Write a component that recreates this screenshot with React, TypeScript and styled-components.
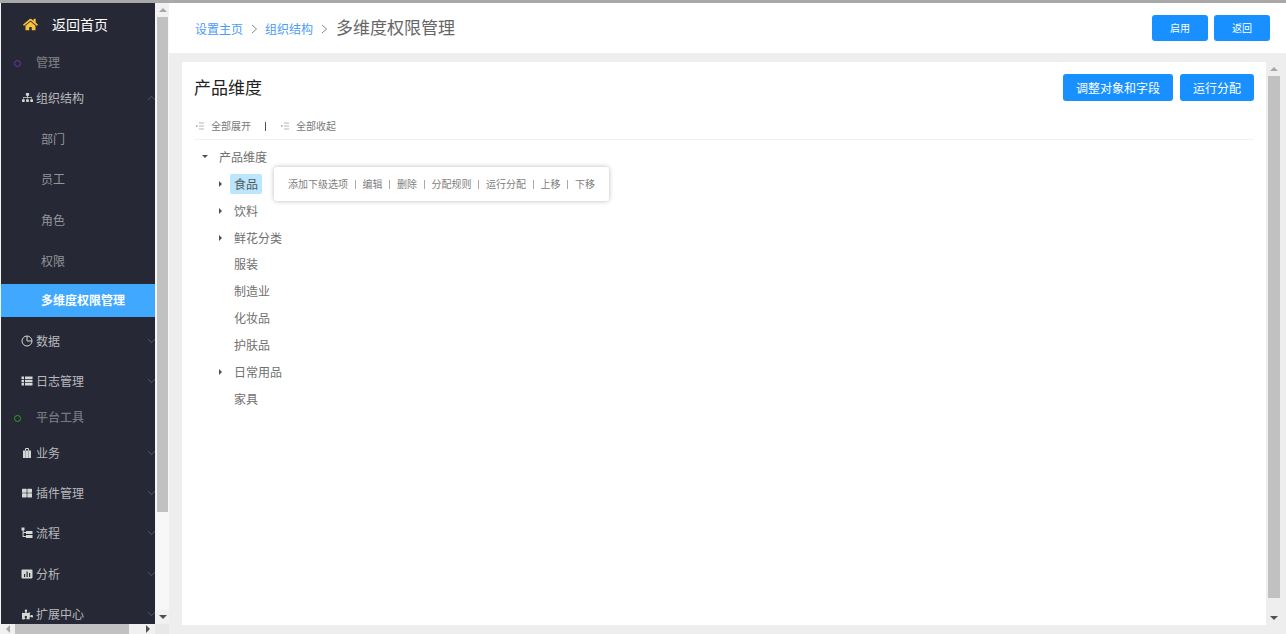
import React from "react";
import styled, { createGlobalStyle } from "styled-components";
import { FaHome, FaSitemap, FaThLarge, FaPuzzlePiece } from "react-icons/fa";
import { ChevronDown, ChevronUp } from "lucide-react";

const Global = createGlobalStyle`
  html, body { margin: 0; padding: 0; overflow: hidden; }
  body { font-family: "Noto Sans CJK SC", "Liberation Sans", sans-serif; }
  * { box-sizing: border-box; }
`;

const Page = styled.div`
  width: 1286px; height: 634px; display: flex; flex-direction: column;
  overflow: hidden; background: #eeeeee;
`;
const TopLine = styled.div`height: 3px; flex: none; background: #a9a9a9;`;
const Body = styled.div`flex: 1; min-height: 0; display: flex;`;

const SideColumn = styled.div`
  width: 169px; flex: none; display: flex; flex-direction: column; background: #f3f3f3;
`;
const SideTop = styled.div`flex: 1; min-height: 0; display: flex; overflow: hidden;`;
const Sidebar = styled.nav`
  width: 154px; margin-left: 1px; flex: none; background: #262835; overflow: hidden;
`;
const Row = styled.div<{ $h: number; $pad: number; $size?: number; $color: string; $weight?: number; $gap?: number; $top?: number }>`
  height: ${p => p.$h}px; flex: none; display: flex; align-items: center; position: relative;
  padding-left: ${p => p.$pad}px; padding-top: ${p => p.$top ?? 0}px; gap: ${p => p.$gap ?? 3}px;
  font-size: ${p => p.$size ?? 12}px; color: ${p => p.$color}; font-weight: ${p => p.$weight ?? 400};
  white-space: nowrap; line-height: 1;
`;
const ActiveRow = styled.div`
  height: 33px; margin: 3px 0 4px; padding: 0 0 1px 40px; display: flex; align-items: center;
  background: #40a9ff; color: #fff; font-size: 12px; font-weight: 700; white-space: nowrap; line-height: 1;
`;
const Ring = styled.span<{ $c: string }>`
  width: 7px; height: 7px; border-radius: 50%; border: 1.5px solid ${p => p.$c}; flex: none;
  margin-top: 2px; margin-right: 15px;
`;
const IconBox = styled.span<{ $w?: number }>`
  width: ${p => p.$w ?? 12}px; display: flex; justify-content: center; align-items: center; flex: none; color: #d6d6d6;
`;
const Chevron = styled.span`
  position: absolute; right: -3px; top: 50%; transform: translateY(-50%); display: flex; color: #666975;
`;

const VBar = styled.div`
  flex: 1; display: flex; flex-direction: column; align-items: center; background: #f7f7f7; margin-left: 1px;
`;
const ArrowCell = styled.div`
  flex: none; height: 14px; width: 100%; display: flex; align-items: center; justify-content: center; background: #f1f1f1;
`;
const Tri = styled.span<{ $dir: "up" | "down" | "left" | "right"; $c?: string; $s?: number }>`
  width: 0; height: 0; flex: none; border-style: solid;
  border-color: transparent;
  ${p => {
    const s = p.$s ?? 4; const c = p.$c ?? "#505050";
    if (p.$dir === "up") return `border-width: 0 ${s}px ${s}px; border-bottom-color: ${c};`;
    if (p.$dir === "down") return `border-width: ${s}px ${s}px 0; border-top-color: ${c};`;
    if (p.$dir === "left") return `border-width: ${s}px ${s}px ${s}px 0; border-right-color: ${c};`;
    return `border-width: ${s}px 0 ${s}px ${s}px; border-left-color: ${c};`;
  }}
`;
const VThumb = styled.div<{ $h: number; $w: number }>`
  width: ${p => p.$w}px; height: ${p => p.$h}px; flex: none; background: #c1c1c1;
`;
const Spacer = styled.div`flex: 1;`;

const HBar = styled.div`
  height: 10px; flex: none; display: flex; align-items: center; background: #f1f1f1; padding-left: 1px;
`;
const HArrow = styled.div`width: 14px; height: 10px; flex: none; display: flex; align-items: center; justify-content: center;`;
const HThumb = styled.div`width: 114px; height: 10px; background: #c1c1c1; flex: none;`;
const HTrack = styled.div`width: 12px; flex: none;`;
const Corner = styled.div`flex: 1; height: 10px; background: #e8e8e8;`;

const Main = styled.main`flex: 1; min-width: 0; display: flex; flex-direction: column;`;
const Header = styled.header`
  height: 50px; flex: none; background: #fff; display: flex; align-items: center;
  padding: 0 16px 0 26px;
`;
const Crumb = styled.span`font-size: 12px; color: #4a9cf5; line-height: 1; margin-top: 2px;`;
const CrumbSep = styled.span`display: flex; color: #888; margin: 2px 6px 0; width: 10px; justify-content: center;`;
const CrumbNow = styled.span`font-size: 17px; color: #666; line-height: 1; margin-top: -3px; margin-left: 1px;`;
const Button = styled.button<{ $w: number; $h: number; $size: number }>`
  width: ${p => p.$w}px; height: ${p => p.$h}px; flex: none; padding: 0; border: none; border-radius: 3px;
  background: #1890ff; color: #fff; font-family: inherit; font-size: ${p => p.$size}px; line-height: 1;
`;
const ButtonGroup = styled.div<{ $gap: number }>`margin-left: auto; display: flex; gap: ${p => p.$gap}px;`;

const Content = styled.div`flex: 1; min-height: 0; display: flex; padding: 9px 0 9px 13px;`;
const Panel = styled.section`width: 1084px; flex: none; background: #fff; padding: 12px 12px 0;`;
const PanelHead = styled.div`height: 27px; display: flex; align-items: center;`;
const Title = styled.h2`margin: -2px 0 0; font-size: 17px; font-weight: 400; color: #222; line-height: 1;`;
const Toolbar = styled.div`
  height: 39px; display: flex; align-items: center; border-bottom: 1px solid #f0f0f0; padding: 12px 0 0 2px;
  font-size: 10px; color: #777; line-height: 1;
`;
const ToolIcon = styled.svg`width: 8px; height: 8px; flex: none; margin-right: 7px;`;
const ToolSep = styled.span`width: 1px; height: 9px; background: #555; margin: 0 15px 0 14px;`;

const Tree = styled.div`padding-top: 3.4px;`;
const TreeRow = styled.div<{ $indent: number }>`
  height: 26.9px; display: flex; align-items: center; position: relative; padding-left: ${p => p.$indent}px;
  font-size: 12px; color: #707070; line-height: 1;
`;
const CaretBox = styled.span`width: 16px; padding-right: 4px; display: flex; justify-content: center; flex: none;`;
const Label = styled.span<{ $selected?: boolean }>`
  height: 20px; padding: 0 4px; display: flex; align-items: center; border-radius: 2px;
  ${p => p.$selected ? "background: #bae7ff; color: #555;" : ""}
`;
const Popup = styled.div`
  position: absolute; left: 80px; top: -3px; height: 34px; width: 335px; padding-left: 14px;
  display: flex; align-items: center; background: #fff; border-radius: 3px;
  box-shadow: 0 0 5px rgba(0,0,0,0.28); font-size: 10px; color: #808080; z-index: 2;
`;
const PopSep = styled.span`width: 1px; height: 9px; background: #aaa; margin: 0 6.75px;`;

const PanelBar = styled.div`
  width: 14px; flex: none; display: flex; flex-direction: column; align-items: center; padding-left: 1px;
`;
const PanelArrow = styled.div`height: 14px; flex: none; display: flex; align-items: center; justify-content: center; width: 100%;`;

const sc = (d: React.ReactNode, w = 12) => <IconBox $w={w}>{d}</IconBox>;

const PieIcon = () => (
  <svg width="12" height="12" viewBox="0 0 12 12" fill="none" stroke="#d6d6d6" strokeWidth="1">
    <circle cx="6" cy="6" r="5" /><path d="M6 1v5h5" />
  </svg>
);
const ListIcon = () => (
  <svg width="12" height="12" viewBox="0 0 12 12" fill="#d6d6d6">
    <rect x="0.5" y="1.5" width="2.5" height="2.5" /><rect x="0.5" y="4.8" width="2.5" height="2.5" /><rect x="0.5" y="8" width="2.5" height="2.5" />
    <rect x="4" y="1.5" width="7.5" height="2.5" /><rect x="4" y="4.8" width="7.5" height="2.5" /><rect x="4" y="8" width="7.5" height="2.5" />
  </svg>
);
const BagIcon = () => (
  <svg width="12" height="12" viewBox="0 0 12 12">
    <rect x="2" y="3.5" width="8" height="7.5" fill="#d6d6d6" />
    <path d="M4.5 3.5V1.5h3v2" fill="none" stroke="#d6d6d6" />
    <rect x="4" y="3.5" width="1" height="7.5" fill="#a9a9a9" /><rect x="7" y="3.5" width="1" height="7.5" fill="#a9a9a9" />
  </svg>
);
const FlowIcon = () => (
  <svg width="12" height="12" viewBox="0 0 12 12" fill="#d6d6d6">
    <rect x="0.5" y="0.5" width="3" height="3" /><rect x="1.6" y="3" width="1" height="7" />
    <rect x="2" y="5" width="3" height="1" /><rect x="2" y="9" width="3" height="1" />
    <rect x="5" y="4" width="6.5" height="3" /><rect x="5" y="8" width="6.5" height="3" />
  </svg>
);
const ReportIcon = () => (
  <svg width="12" height="12" viewBox="0 0 12 12">
    <rect x="0.5" y="1.5" width="11" height="9" rx="1" fill="#d6d6d6" />
    <rect x="3" y="6" width="1.2" height="3" fill="#262835" /><rect x="5.5" y="3.5" width="1.2" height="5.5" fill="#262835" /><rect x="8" y="5" width="1.2" height="4" fill="#262835" />
  </svg>
);
const OutdentIcon = () => (
  <ToolIcon viewBox="0 0 8 8" fill="#b5b5b5">
    <rect x="3" y="0.5" width="5" height="1" /><rect x="3" y="3.5" width="5" height="1" /><rect x="3" y="6.5" width="5" height="1" />
    <rect x="0" y="3" width="1.5" height="2" />
  </ToolIcon>
);

const groupProps = { $pad: 20, $color: "#b9b9bd" };
const Down = () => <Chevron><ChevronDown size={13} strokeWidth={1.3} /></Chevron>;

const treeItems: { name: string; caret?: boolean }[] = [
  { name: "饮料", caret: true }, { name: "鲜花分类", caret: true }, { name: "服装" }, { name: "制造业" },
  { name: "化妆品" }, { name: "护肤品" }, { name: "日常用品", caret: true }, { name: "家具" },
];
const popupItems = ["添加下级选项", "编辑", "删除", "分配规则", "运行分配", "上移", "下移"];

export default function App() {
  return (
    <Page>
      <Global />
      <TopLine />
      <Body>
        <SideColumn>
          <SideTop>
            <Sidebar>
              <Row $h={42} $pad={22} $size={14} $color="#ffffff" $gap={14}>
                {sc(<FaHome size={15} color="#f7c33c" />, 15)}返回首页
              </Row>
              <Row $h={32} $top={2} $pad={13} $color="#77787f" $weight={500} $gap={0}>
                <Ring $c="#7a2fb5" />管理
              </Row>
              <Row $h={41.5} $pad={20} $color="#b9b9bd">
                {sc(<FaSitemap size={11} />)}组织结构
                <Chevron><ChevronUp size={13} strokeWidth={1.3} /></Chevron>
              </Row>
              <Row $h={40.5} $pad={40} $color="#94959b">部门</Row>
              <Row $h={40.5} $pad={40} $color="#94959b">员工</Row>
              <Row $h={40.5} $pad={40} $color="#94959b">角色</Row>
              <Row $h={41} $pad={40} $color="#94959b">权限</Row>
              <ActiveRow>多维度权限管理</ActiveRow>
              <Row {...groupProps} $h={40}>{sc(<PieIcon />)}数据<Down /></Row>
              <Row {...groupProps} $h={40}>{sc(<ListIcon />)}日志管理<Down /></Row>
              <Row $h={32} $pad={13} $color="#77787f" $weight={500} $gap={0}>
                <Ring $c="#2aa52a" />平台工具
              </Row>
              <Row {...groupProps} $h={40}>{sc(<BagIcon />)}业务<Down /></Row>
              <Row {...groupProps} $h={40}>{sc(<FaThLarge size={10} />)}插件管理<Down /></Row>
              <Row {...groupProps} $h={40}>{sc(<FlowIcon />)}流程<Down /></Row>
              <Row {...groupProps} $h={41}>{sc(<ReportIcon />)}分析<Down /></Row>
              <Row {...groupProps} $h={40}>{sc(<FaPuzzlePiece size={11} />)}扩展中心<Down /></Row>
            </Sidebar>
            <VBar>
              <ArrowCell><Tri $dir="up" $c="#a8a8a8" /></ArrowCell>
              <VThumb $w={11} $h={495} />
              <Spacer />
              <ArrowCell><Tri $dir="down" /></ArrowCell>
            </VBar>
          </SideTop>
          <HBar>
            <HArrow><Tri $dir="left" $c="#a8a8a8" /></HArrow>
            <HThumb />
            <HTrack />
            <HArrow><Tri $dir="right" /></HArrow>
            <Corner />
          </HBar>
        </SideColumn>
        <Main>
          <Header>
            <Crumb>设置主页</Crumb>
            <CrumbSep><svg width="7" height="10" viewBox="0 0 7 10" fill="none" stroke="currentColor" strokeWidth="1"><path d="M1 1l4.5 4L1 9" /></svg></CrumbSep>
            <Crumb>组织结构</Crumb>
            <CrumbSep><svg width="7" height="10" viewBox="0 0 7 10" fill="none" stroke="currentColor" strokeWidth="1"><path d="M1 1l4.5 4L1 9" /></svg></CrumbSep>
            <CrumbNow>多维度权限管理</CrumbNow>
            <ButtonGroup $gap={6}>
              <Button $w={56} $h={26} $size={10}>启用</Button>
              <Button $w={56} $h={26} $size={10}>返回</Button>
            </ButtonGroup>
          </Header>
          <Content>
            <Panel>
              <PanelHead>
                <Title>产品维度</Title>
                <ButtonGroup $gap={7}>
                  <Button $w={110} $h={27} $size={12}>调整对象和字段</Button>
                  <Button $w={74} $h={27} $size={12}>运行分配</Button>
                </ButtonGroup>
              </PanelHead>
              <Toolbar>
                <OutdentIcon />
                全部展开
                <ToolSep />
                <OutdentIcon />
                全部收起
              </Toolbar>
              <Tree>
                <TreeRow $indent={5}>
                  <CaretBox><Tri $dir="down" $s={3} /></CaretBox>
                  <Label>产品维度</Label>
                </TreeRow>
                <TreeRow $indent={20}>
                  <CaretBox><Tri $dir="right" $s={3} /></CaretBox>
                  <Label $selected>食品</Label>
                  <Popup>
                    {popupItems.map((t, i) => (
                      <React.Fragment key={t}>
                        {i > 0 && <PopSep />}
                        {t}
                      </React.Fragment>
                    ))}
                  </Popup>
                </TreeRow>
                {treeItems.map(it => (
                  <TreeRow $indent={20} key={it.name}>
                    <CaretBox>{it.caret && <Tri $dir="right" $s={3} />}</CaretBox>
                    <Label>{it.name}</Label>
                  </TreeRow>
                ))}
              </Tree>
            </Panel>
            <PanelBar>
              <PanelArrow><Tri $dir="up" $c="#a8a8a8" /></PanelArrow>
              <VThumb $w={12} $h={522} />
              <Spacer />
              <PanelArrow><Tri $dir="down" /></PanelArrow>
            </PanelBar>
          </Content>
        </Main>
      </Body>
    </Page>
  );
}
